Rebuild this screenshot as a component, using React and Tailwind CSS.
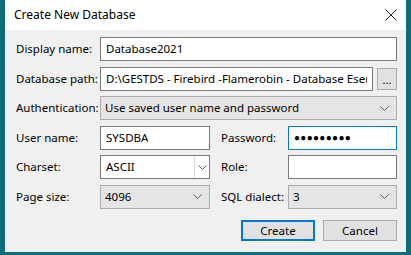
import { useState } from "react";

function Chevron() {
    return (
        <svg width="9" height="5" viewBox="0 0 9 5" className="shrink-0">
            <path d="M0.5 0.5 L4.5 4.5 L8.5 0.5" fill="none" stroke="#606060" strokeWidth="1" />
        </svg>
    );
}

function Label({ children, className = "w-[84px]" }) {
    return <span className={"shrink-0 whitespace-nowrap " + className}>{children}</span>;
}

function TextBox({ value, className = "", focused = false, password = false }) {
    return (
        <div
            className={
                "h-full flex items-center px-[5px] bg-white border overflow-hidden " +
                (focused ? "border-[#0078d7] " : "border-[#7a7a7a] ") +
                className
            }
        >
            {password ? (
                <span className="text-[10px] tracking-[0.3px] text-black">{value}</span>
            ) : (
                <span className="block min-w-0 overflow-hidden whitespace-nowrap">{value}</span>
            )}
        </div>
    );
}

function Combo({ value, className = "", editable = false }) {
    if (editable) {
        return (
            <div className={"h-full flex items-center bg-white border border-[#7a7a7a] " + className}>
                <span className="flex-1 px-[5px]">{value}</span>
                <div className="h-full w-[15px] border-l border-[#d9d9d9] flex items-center justify-center">
                    <Chevron />
                </div>
            </div>
        );
    }
    return (
        <div className={"h-full flex items-center pl-[4px] pr-[7px] bg-[#e5e5e5] border border-[#adadad] " + className}>
            <span className="flex-1 whitespace-nowrap">{value}</span>
            <Chevron />
        </div>
    );
}

export default function App() {
    const [dialect] = useState("3");

    return (
        <div
            className="w-[411px] h-[255px] bg-[#0f6c79] flex text-[11.5px] text-black"
            style={{ fontFamily: '"Segoe UI", "Noto Sans", "Open Sans", sans-serif' }}
        >
            <div className="ml-[5px] w-[401px] h-[252px] flex flex-col">
                {/* title bar */}
                <div className="h-[30px] bg-white flex items-center pl-[9px] pr-[9px]">
                    <span className="flex-1 text-[12px]">Create New Database</span>
                    <svg width="12" height="12" viewBox="0 0 12 12">
                        <path d="M0.5 0.5 L11.5 11.5 M11.5 0.5 L0.5 11.5" stroke="#222" strokeWidth="1" />
                    </svg>
                </div>

                {/* body */}
                <div className="flex-1 bg-[#f0f0f0] pl-[11px] pr-[9px] pt-[7px] flex flex-col gap-[5.5px]">
                    <div className="h-[24px] flex items-center">
                        <Label>Display name:</Label>
                        <TextBox value="Database2021" className="flex-1" />
                    </div>

                    <div className="h-[24px] flex items-center">
                        <Label>Database path:</Label>
                        <TextBox value="D:\GESTDS - Firebird -Flamerobin - Database Esempio" className="flex-1 min-w-0" />
                        <div className="ml-[4px] shrink-0 w-[20px] h-[22px] bg-[#e1e1e1] border border-[#adadad] flex items-end justify-center pb-[4px] leading-none text-[11px]">
                            ...
                        </div>
                    </div>

                    <div className="h-[24px] flex items-center">
                        <Label>Authentication:</Label>
                        <Combo value="Use saved user name and password" className="flex-1" />
                    </div>

                    <div className="h-[24px] flex items-center">
                        <Label>User name:</Label>
                        <TextBox value="SYSDBA" className="w-[110px] shrink-0" />
                        <Label className="w-[67px] ml-[11px]">Password:</Label>
                        <TextBox value="●●●●●●●●●" className="flex-1" focused password />
                    </div>

                    <div className="h-[24px] flex items-center">
                        <Label>Charset:</Label>
                        <Combo value="ASCII" className="w-[110px] shrink-0" editable />
                        <Label className="w-[67px] ml-[11px]">Role:</Label>
                        <TextBox value="" className="flex-1" />
                    </div>

                    <div className="h-[24px] flex items-center">
                        <Label>Page size:</Label>
                        <Combo value="4096" className="w-[110px] shrink-0" />
                        <Label className="w-[67px] ml-[11px]">SQL dialect:</Label>
                        <Combo value={dialect} className="flex-1" />
                    </div>

                    <div className="flex justify-end gap-[8px] mt-[6px]">
                        <button className="w-[74px] h-[21px] bg-[#e1e1e1] border-2 border-[#0078d7] flex items-center justify-center">
                            Create
                        </button>
                        <button className="w-[74px] h-[21px] bg-[#e1e1e1] border border-[#adadad] flex items-center justify-center">
                            Cancel
                        </button>
                    </div>
                </div>
            </div>
        </div>
    );
}
